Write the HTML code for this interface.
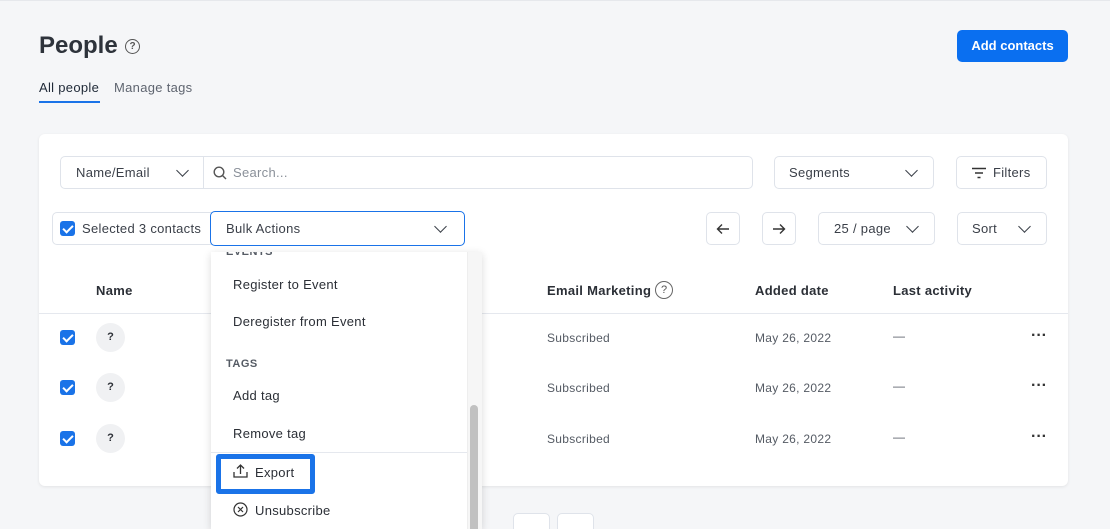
<!DOCTYPE html>
<html style="width:1110px;height:529px;overflow:hidden"><head><style>
*{box-sizing:border-box;margin:0;padding:0}
body{width:1110px;height:529px;overflow:hidden;background:#f5f6f8;font-family:"Liberation Sans",sans-serif;color:#2b2f36;position:relative;letter-spacing:.3px}
.a{position:absolute}
.box{position:absolute;border:1px solid #dfe3ea;border-radius:5px;background:#fff;font-size:13px;color:#3a3f48;display:flex;align-items:center}
.chev{position:absolute;width:9px;height:9px;border-right:1.6px solid #3a3f48;border-bottom:1.6px solid #3a3f48;transform:rotate(45deg)}
.cb{position:absolute;width:15px;height:15px;background:#1a73e8;border-radius:3px}
.cb:after{content:"";position:absolute;left:5px;top:2px;width:4px;height:8px;border-right:2px solid #fff;border-bottom:2px solid #fff;transform:rotate(45deg)}
.av{position:absolute;width:29px;height:29px;border-radius:50%;background:#f0f1f3;font-size:11px;font-weight:bold;text-align:center;line-height:29px;letter-spacing:0}
.t{position:absolute;font-size:12px;color:#555b64}
.dots{position:absolute;font-size:16px;font-weight:bold;letter-spacing:0px;color:#333;line-height:10px}
.mi{position:absolute;left:22px;font-size:13px;color:#2b2f36}
</style></head><body>
<div class="a" style="left:0;top:0;width:1110px;height:1px;background:#e6e8ec"></div>
<div class="a" style="left:39px;top:32px;font-size:24px;font-weight:bold;color:#2e333b;letter-spacing:0">People</div>
<div class="a" style="left:125px;top:39px;width:15px;height:15px;border:1.4px solid #555;border-radius:50%;font-size:10px;text-align:center;line-height:13px;font-weight:bold;color:#555;letter-spacing:0">?</div>
<div class="a" style="left:957px;top:30px;width:111px;height:32px;background:#0a6ff0;border-radius:5px;color:#fff;font-size:13px;font-weight:bold;text-align:center;line-height:32px;letter-spacing:0">Add contacts</div>
<div class="a" style="left:39px;top:80px;font-size:13px;color:#1f2937">All people</div>
<div class="a" style="left:39px;top:101px;width:61px;height:2px;background:#1a73e8"></div>
<div class="a" style="left:114px;top:80px;font-size:13px;color:#5f6570">Manage tags</div>

<div class="a" style="left:39px;top:134px;width:1029px;height:352px;background:#fff;border-radius:6px;box-shadow:0 1px 3px rgba(0,0,0,.08)"></div>

<div class="box" style="left:60px;top:156px;width:144px;height:33px;border-radius:5px 0 0 5px;padding-left:15px">Name/Email<span class="chev" style="left:117px;top:9px"></span></div>
<div class="box" style="left:203px;top:156px;width:550px;height:33px;border-radius:0 5px 5px 0;padding-left:29px;color:#8a9099">Search...
<svg class="a" style="left:9px;top:9px" width="14" height="14" viewBox="0 0 14 14"><circle cx="6" cy="6" r="4.8" fill="none" stroke="#555" stroke-width="1.4"/><path d="M9.5 9.5L13 13" stroke="#555" stroke-width="1.4"/></svg></div>
<div class="box" style="left:774px;top:156px;width:160px;height:33px;padding-left:14px">Segments<span class="chev" style="left:132px;top:9px"></span></div>
<div class="box" style="left:956px;top:156px;width:91px;height:33px;padding-left:36px">Filters
<svg class="a" style="left:14px;top:10px" width="16" height="12"><path d="M1 1.5h14M4 6h8M6.5 10.5h3" stroke="#333" stroke-width="1.4"/></svg></div>

<div class="box" style="left:52px;top:212px;width:160px;height:33px;padding-left:29px;border-radius:5px 0 0 5px">Selected 3 contacts</div>
<div class="cb" style="left:60px;top:221px"></div>
<div class="box" style="left:210px;top:211px;width:255px;height:35px;border:1.5px solid #1a73e8;padding-left:15px">Bulk Actions<span class="chev" style="left:225px;top:10px"></span></div>

<div class="box" style="left:706px;top:212px;width:34px;height:33px;justify-content:center"><svg width="14" height="12"><path d="M13 6H1.5M6 1.5L1.5 6 6 10.5" fill="none" stroke="#333" stroke-width="1.4"/></svg></div>
<div class="box" style="left:762px;top:212px;width:34px;height:33px;justify-content:center"><svg width="14" height="12"><path d="M1 6h11.5M8 1.5L12.5 6 8 10.5" fill="none" stroke="#333" stroke-width="1.4"/></svg></div>
<div class="box" style="left:818px;top:212px;width:117px;height:33px;padding-left:15px">25 / page<span class="chev" style="left:89px;top:9px"></span></div>
<div class="box" style="left:957px;top:212px;width:90px;height:33px;padding-left:14px">Sort<span class="chev" style="left:62px;top:9px"></span></div>

<div class="a" style="left:96px;top:283px;font-size:13px;font-weight:bold">Name</div>
<div class="a" style="left:547px;top:283px;font-size:13px;font-weight:bold">Email Marketing</div>
<div class="a" style="left:655px;top:281px;width:18px;height:18px;border:1.3px solid #666;border-radius:50%;font-size:11px;text-align:center;line-height:16px;color:#555;letter-spacing:0">?</div>
<div class="a" style="left:755px;top:283px;font-size:13px;font-weight:bold">Added date</div>
<div class="a" style="left:893px;top:283px;font-size:13px;font-weight:bold">Last activity</div>
<div class="a" style="left:39px;top:313px;width:1029px;height:1px;background:#e5e8ee"></div>

<div class="cb" style="left:60px;top:330px"></div><div class="av" style="left:96px;top:323px">?</div>
<div class="t" style="left:547px;top:331px">Subscribed</div><div class="t" style="left:755px;top:331px">May 26, 2022</div><div class="t" style="left:893px;top:329px">—</div><div class="dots" style="left:1031px;top:331px">···</div>
<div class="cb" style="left:60px;top:380px"></div><div class="av" style="left:96px;top:373px">?</div>
<div class="t" style="left:547px;top:381px">Subscribed</div><div class="t" style="left:755px;top:381px">May 26, 2022</div><div class="t" style="left:893px;top:379px">—</div><div class="dots" style="left:1031px;top:381px">···</div>
<div class="cb" style="left:60px;top:431px"></div><div class="av" style="left:96px;top:424px">?</div>
<div class="t" style="left:547px;top:432px">Subscribed</div><div class="t" style="left:755px;top:432px">May 26, 2022</div><div class="t" style="left:893px;top:430px">—</div><div class="dots" style="left:1031px;top:432px">···</div>

<div class="a" style="left:513px;top:513px;width:37px;height:30px;border:1px solid #dfe3ea;border-radius:5px;background:#fff"></div>
<div class="a" style="left:557px;top:513px;width:37px;height:30px;border:1px solid #dfe3ea;border-radius:5px;background:#fff"></div>

<div class="a" style="left:211px;top:252px;width:271px;height:277px;background:#fff;box-shadow:0 2px 8px rgba(0,0,0,.15);overflow:hidden">
  <div class="a" style="left:15px;top:-6px;font-size:11px;font-weight:bold;color:#555b64;letter-spacing:.5px">EVENTS</div>
  <div class="mi" style="top:25px">Register to Event</div>
  <div class="mi" style="top:62px">Deregister from Event</div>
  <div class="a" style="left:15px;top:106px;font-size:11px;font-weight:bold;color:#555b64;letter-spacing:.5px">TAGS</div>
  <div class="mi" style="top:136px">Add tag</div>
  <div class="mi" style="top:174px">Remove tag</div>
  <div class="a" style="left:0;top:200px;width:256px;height:1px;background:#e5e8ee"></div>
  <div class="a" style="left:5px;top:202px;width:99px;height:40px;border:5px solid #1a73e8;border-radius:3px;background:#fff"></div>
  <svg class="a" style="left:22px;top:211px" width="15" height="15"><path d="M7.5 11V2M4 5.5l3.5-3.5 3.5 3.5M1 9v5h13V9" fill="none" stroke="#333" stroke-width="1.3"/></svg>
  <div class="mi" style="left:44px;top:213px">Export</div>
  <svg class="a" style="left:22px;top:250px" width="15" height="15"><circle cx="7.5" cy="7.5" r="6.5" fill="none" stroke="#333" stroke-width="1.2"/><path d="M5 5l5 5M10 5l-5 5" stroke="#333" stroke-width="1.2"/></svg>
  <div class="mi" style="left:44px;top:251px">Unsubscribe</div>
  <div class="a" style="left:256px;top:0;width:15px;height:290px;background:#f6f6f6;border-left:1px solid #eee"></div>
  <div class="a" style="left:259px;top:153px;width:8px;height:140px;background:#c1c1c1;border-radius:4px"></div>
</div>
</body></html>
